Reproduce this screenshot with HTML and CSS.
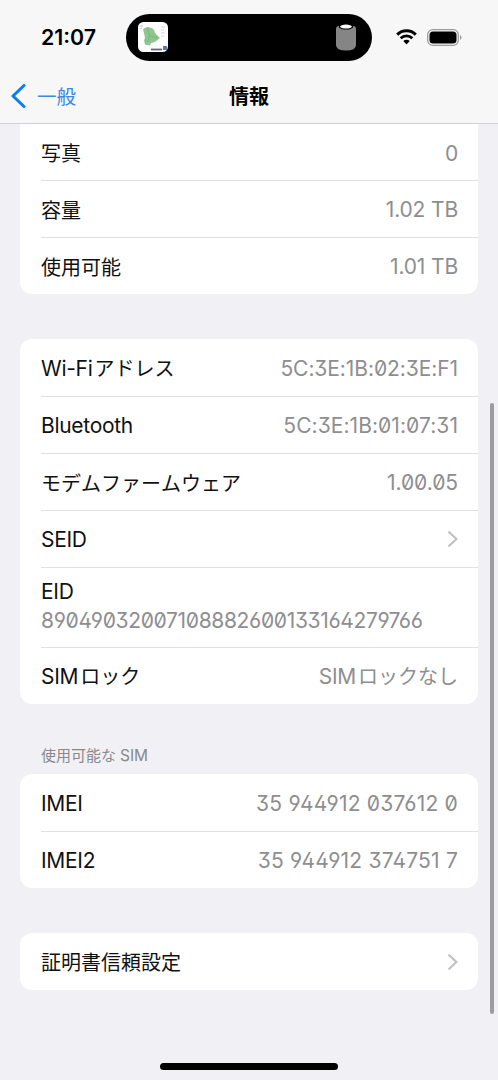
FILE: index.html
```html
<!DOCTYPE html>
<html lang="ja">
<head>
<meta charset="utf-8">
<title>情報</title>
<link rel="stylesheet" href="styles.css">
</head>
<body>
<div class="phone">
  <header class="top">
    <div class="status">
      <span class="time">21:07</span>
      <div class="island">
        <svg class="app" viewBox="0 0 30 30"><rect width="30" height="30" rx="5.5" fill="#fff"/><path d="M5 7 9 5l5 1 2 2 1 3 5 5-5 4-4 1-1 2.500-5-1-1-4 1-3z" fill="#8fc58e"/><path d="m9 6 3 8 7 2M12 14l-3 6" stroke="#76ae79" stroke-width=".7" fill="none"/><path d="M23 5h4M23 8h3M23 11h4M23 14h3" stroke="#e8cbd3" stroke-width="1"/><path d="M2 4h3M2 7l2-1" stroke="#a8c5df"/><path d="M13 27.500h11" stroke="#666a75" stroke-width="1.800"/><path d="M25 26h4" stroke="#5b7dac" stroke-width="4"/></svg>
        <svg class="pod" viewBox="0 0 20 27"><path d="M0 5Q0 2 3 2h14q3 0 3 3v16q0 5.500-10 5.500T0 21z" fill="#858585"/><ellipse cx="10" cy="2.700" rx="7.200" ry="2.900" fill="#000"/><ellipse cx="10" cy="2.600" rx="5.900" ry="2" fill="#fff"/></svg>
      </div>
      <svg class="wifi" viewBox="0 0 21 16"><path d="M1.200 5.600a13.200 13.200 0 0 1 18.600 0" fill="none" stroke="#000" stroke-width="2.900"/><path d="M4.700 9.300a8.200 8.200 0 0 1 11.600 0" fill="none" stroke="#000" stroke-width="2.800"/><path d="M7.300 12a4.500 4.500 0 0 1 6.400 0l-3.200 3.500z"/></svg>
      <svg class="battery" viewBox="0 0 35 17"><rect x=".7" y=".7" width="30.600" height="15.600" rx="5" fill="none" stroke="#9b9b9b" stroke-width="1.300"/><rect x="2.500" y="2.500" width="27" height="12" rx="3.500"/><path d="M33 6q1.500.7 1.500 2.500T33 11z" fill="#9b9b9b"/></svg>
    </div>
    <nav class="nav">
      <a class="back"><svg viewBox="0 0 15 24"><path d="M13 1.500 2 12l11 10.500" fill="none" stroke="#087cf5" stroke-width="3" stroke-linecap="round" stroke-linejoin="round"/></svg><span>一般</span></a>
      <h1>情報</h1>
    </nav>
  </header>
  <main>
    <section class="group first">
      <div class="row"><span class="ja">写真</span><span class="value">0</span></div>
      <div class="row"><span class="ja">容量</span><span class="value">1.02 TB</span></div>
      <div class="row"><span class="ja">使用可能</span><span class="value">1.01 TB</span></div>
    </section>
    <section class="group">
      <div class="row"><span class="ja"><span class="latin wifi-label">Wi-Fi</span>アドレス</span><span class="value code">5C:3E:1B:02:3E:F1</span></div>
      <div class="row"><span class="latin">Bluetooth</span><span class="value code bt">5C:3E:1B:01:07:31</span></div>
      <div class="row"><span class="ja">モデムファームウェア</span><span class="value code">1.00.05</span></div>
      <div class="row"><span class="latin">SEID</span><svg class="chevron" viewBox="0 0 10 16"><path d="m1.200 1.200 7.300 6.800-7.300 6.800" fill="none" stroke="#c1c1c3" stroke-width="2.200" stroke-linecap="round" stroke-linejoin="round"/></svg></div>
      <div class="row stacked"><span class="latin">EID</span><span class="value eid">89049032007108882600133164279766</span></div>
      <div class="row last"><span class="ja"><span class="latin sim">SIM</span>ロック</span><span class="value ja"><span class="latin sim">SIM</span>ロックなし</span></div>
    </section>
    <h2>使用可能な<span>SIM</span></h2>
    <section class="group">
      <div class="row"><span class="latin">IMEI</span><span class="value code imei">35 944912 037612 0</span></div>
      <div class="row"><span class="latin">IMEI2</span><span class="value code imei">35 944912 374751 7</span></div>
    </section>
    <section class="group">
      <div class="row"><span class="ja">証明書信頼設定</span><svg class="chevron" viewBox="0 0 10 16"><path d="m1.200 1.200 7.300 6.800-7.300 6.800" fill="none" stroke="#c1c1c3" stroke-width="2.200" stroke-linecap="round" stroke-linejoin="round"/></svg></div>
    </section>
  </main>
  <div class="scrollbar"></div>
  <div class="home"></div>
</div>
</body>
</html>
```
FILE: styles.css
```css
* { box-sizing: border-box; }
body { margin: 0; background: #f0f0f5; }
.phone { position: relative; width: 498px; height: 1080px; overflow: hidden; font-family: Inter, "Noto Sans CJK JP", sans-serif; font-size: 20px; color: #111; }
.top { height: 124px; background: #f7f7f7; border-bottom: 1px solid #d2d2d4; }
.status { display: flex; align-items: center; height: 74px; padding-left: 41px; }
.time { width: 85px; font-size: 21.300px; font-weight: 600; color: #000; }
.island { display: flex; align-items: center; justify-content: space-between; width: 246px; height: 47px; padding: 0 16px 0 12px; border-radius: 24px; background: #000; }
.app { width: 30px; height: 30px; }
.pod { width: 20px; height: 27px; }
.wifi { width: 21px; height: 16px; margin-left: 24px; }
.battery { width: 35px; height: 17px; margin-left: 10px; }
.nav { display: grid; grid-template-columns: 1fr 1fr 1fr; align-items: center; height: 44px; }
.back { display: flex; align-items: center; gap: 11px; padding-left: 11px; color: #3b87e4; font-size: 19.500px; }
.back svg { width: 15px; height: 24px; }
.back span { margin-bottom: 2px; }
h1 { margin: 0 0 1px; font-size: 20px; font-weight: 700; text-align: center; color: #000; }
.group { margin: 0 20px 45px; border-radius: 12px; background: #fff; overflow: hidden; }
.row { display: flex; align-items: center; justify-content: space-between; height: 57px; margin-left: 21px; padding: 2px 20px 0 0; line-height: 28px; white-space: nowrap; }
.row + .row { border-top: 1px solid #e0e0e2; }
.row.last { padding-top: 0; }
.first { border-radius: 0 0 12px 12px; }
.first .row:first-child { height: 56px; padding-top: 3px; }
.ja { padding-top: 1px; font-kerning: none; }
.latin { font-size: 21px; letter-spacing: -0.300px; line-height: 26px; }
.value { color: #8e8e90; }
.value:not(.ja) { font-size: 21px; letter-spacing: -0.150px; font-weight: 380; }
.value .latin { font-weight: 380; }
.value.code { font-feature-settings: "zero", "ss01"; letter-spacing: -0.080px; }
.value.code.bt { letter-spacing: 0.060px; }
.value.code.imei { letter-spacing: 0.200px; }
.value.eid { font-feature-settings: "zero", "ss01"; letter-spacing: -0.350px; }
.row.stacked { height: 80px; flex-direction: column; align-items: flex-start; justify-content: flex-start; gap: 2px; padding-top: 11px; }
.stacked .value { line-height: 28px; }
.wifi-label { margin-right: 2px; }
.sim { margin-right: 2px; }
.chevron { width: 10px; height: 16px; margin-bottom: 2px; }
h2 { margin: -3px 0 8px 41px; height: 20px; font-size: 15px; font-weight: 400; line-height: 20px; color: #88888d; }
h2 span { margin-left: 4px; font-size: 15.500px; }
.scrollbar { position: absolute; left: 490px; top: 403px; width: 4px; height: 611px; border-radius: 2px; background: #9c9ca1; }
.home { position: absolute; left: 160px; top: 1063px; width: 178px; height: 7px; border-radius: 4px; background: #000; }
```
